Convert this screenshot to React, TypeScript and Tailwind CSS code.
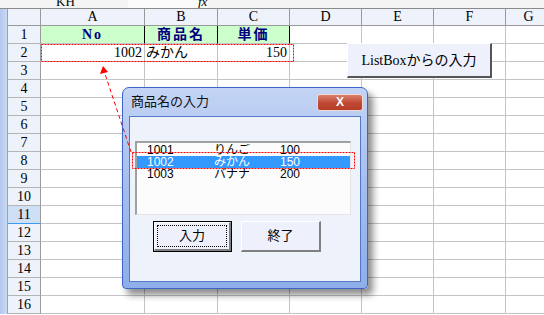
import React from 'react';

const serif = "font-['Liberation_Serif','Noto_Sans_CJK_JP',serif]";
const sans = "font-['Liberation_Sans','Noto_Sans_CJK_JP',sans-serif]";

const colWidths = [104, 73, 72, 72, 72, 72, 46];
const colNames = ['A', 'B', 'C', 'D', 'E', 'F', 'G'];

const listItems = [
  { no: '1001', name: 'りんご', price: '100' },
  { no: '1002', name: 'みかん', price: '150' },
  { no: '1003', name: 'バナナ', price: '200' },
];

function RowHeader({ n }: { n: number }) {
  const selected = n === 11;
  return (
    <div
      className={
        'flex h-[18px] w-[33px] shrink-0 items-center justify-center border-r border-r-[#9a9a9a] text-[14px] leading-none ' +
        (selected
          ? 'border-b border-b-[#3c9bf4] bg-[#cfdff5]'
          : 'border-b border-b-[#b4b4b4] bg-[#eef2fb]')
      }
    >
      {n}
    </div>
  );
}

function SheetRow({ n }: { n: number }) {
  return (
    <div className="flex">
      <RowHeader n={n} />
      {colWidths.map((w, i) => {
        let content: React.ReactNode = null;
        let cls = 'border-r border-b border-[#c4c4c4] bg-white';
        if (n === 1 && i < 3) {
          cls = 'border-r border-b border-r-black border-b-[#c4c4c4] bg-[#ccffcc] justify-center font-bold tracking-[2px] text-[#000080]';
          content = ['No', '商品名', '単価'][i];
        }
        if (n === 2) {
          if (i === 0) {
            cls += ' justify-end pr-[2px]';
            content = '1002';
          } else if (i === 1) {
            cls += ' justify-start pl-[1px]';
            content = 'みかん';
          } else if (i === 2) {
            cls += ' justify-end pr-[2px]';
            content = '150';
          }
        }
        return (
          <div
            key={i}
            style={{ width: w }}
            className={'flex h-[18px] shrink-0 items-center text-[14px] leading-none ' + cls}
          >
            {content}
          </div>
        );
      })}
    </div>
  );
}

function Dialog() {
  return (
    <div className="absolute left-[122px] top-[87px] flex h-[202px] w-[246px] flex-col rounded-t-[7px] rounded-b-[4px] border border-[#3d64c8] bg-gradient-to-b from-[#c3d4f4] via-[#a4bdee] to-[#8eaee9] shadow-[5px_6px_7px_rgba(0,0,0,0.45)]">
      {/* title bar */}
      <div className="flex h-[28px] shrink-0 items-center justify-between pl-[8px] pr-[4px]">
        <span className={sans + ' text-[13px] text-[#101010]'}>商品名の入力</span>
        <div className="flex h-[17px] w-[46px] items-center justify-center rounded-[3px] border border-[#f0d8d0] bg-gradient-to-b from-[#d8806c] via-[#c14a36] to-[#b43c2a]">
          <span className={sans + ' text-[12px] font-bold leading-none text-white'}>X</span>
        </div>
      </div>
      {/* client area */}
      <div className="mx-[6px] mb-[6px] flex flex-1 flex-col border border-[#5577c8] bg-[#eef2fb] px-[5px] pt-[24px]">
        <div className="h-[74px] w-[216px] overflow-hidden border-t-2 border-l-2 border-t-[#a0a0a0] border-l-[#a0a0a0] border-r border-b border-r-[#e4e4e4] border-b-[#e4e4e4] bg-[#fcfcfc] pt-[1px]">
          {listItems.map((it, i) => (
            <div
              key={it.no}
              className={
                sans +
                ' grid h-[12px] grid-cols-[67px_66px_1fr] overflow-hidden pl-[10px] text-[12px] leading-[12px] ' +
                (i === 1 ? 'bg-[#3399ff] text-white' : 'text-black')
              }
            >
              <span className="h-[12px] overflow-hidden">{it.no}</span>
              <span className="h-[12px] overflow-hidden">{it.name}</span>
              <span className="h-[12px] overflow-hidden">{it.price}</span>
            </div>
          ))}
        </div>
        <div className="mt-[6px] flex gap-[9px] pl-[18px]">
          <div className="h-[31px] w-[79px] border border-black">
            <div className="flex h-full w-full items-center justify-center border-t border-l border-r-2 border-b-2 border-t-white border-l-white border-r-[#808080] border-b-[#808080] bg-[#eef0fb] p-[2px]">
              <div className={sans + ' flex h-full w-full items-center justify-center border border-dotted border-black text-[13px]'}>
                入力
              </div>
            </div>
          </div>
          <div className={sans + ' flex h-[31px] w-[80px] items-center justify-center border-t border-l border-r-2 border-b-2 border-t-white border-l-white border-r-[#808080] border-b-[#808080] bg-[#eef0fb] text-[13px]'}>
            終了
          </div>
        </div>
      </div>
    </div>
  );
}

export default function App() {
  const rows = Array.from({ length: 16 }, (_, i) => i + 1);
  return (
    <div className={serif + ' relative h-[315px] w-[544px] overflow-hidden bg-white text-black'}>
      {/* formula bar remnant */}
      <div className="flex h-[9px] items-end border-b border-[#8a8a8a] bg-[#f4f4f4]">
        <div className="relative h-[9px] w-[128px] overflow-hidden">
          <span className="absolute -top-[7px] left-[56px] text-[13px]">KH</span>
        </div>
        <div className="relative h-[9px] w-[80px] overflow-hidden bg-[#fbfbfb]">
          <span className="absolute -top-[7px] left-[70px] text-[13px] italic">fx</span>
        </div>
      </div>

      <div className="flex">
        {/* window frame strip */}
        <div className="w-[8px] shrink-0 border-r border-[#8ea3c6] bg-gradient-to-r from-[#b3c8ee] to-[#cad9f4]" />
        <div className="flex flex-col">
          {/* column header */}
          <div className="flex">
            <div className="h-[17px] w-[33px] shrink-0 border-r border-b border-[#9a9a9a] bg-[#eef2fb]" />
            {colWidths.map((w, i) => (
              <div
                key={i}
                style={{ width: w }}
                className="flex h-[17px] shrink-0 items-center justify-center border-r border-b border-[#9a9a9a] bg-[#eef2fb] text-[14px] leading-none"
              >
                {colNames[i]}
              </div>
            ))}
          </div>
          {rows.map((n) => (
            <SheetRow key={n} n={n} />
          ))}
        </div>
      </div>

      {/* sheet button */}
      <div className="absolute left-[347px] top-[43px] flex h-[35px] w-[145px] items-center justify-center border-t border-l border-r-2 border-b-2 border-t-white border-l-white border-r-[#555] border-b-[#555] bg-[#eef0fb] text-[14px]">
        ListBoxからの入力
      </div>

      <Dialog />

      {/* annotations */}
      <svg className="pointer-events-none absolute left-0 top-0" width={544} height={315}>
        <rect x={41.5} y={44.5} width={252} height={17} fill="none" stroke="#ff0000" strokeDasharray="2 1" />
        <rect x={132.5} y={152.5} width={222} height={16} fill="none" stroke="#ff0000" strokeDasharray="2 1" />
        <line x1={131} y1={152} x2={105} y2={74} stroke="#ff0000" strokeDasharray="4 3" />
        <polygon points="103,66 100,74 108,72" fill="#ff0000" />
      </svg>
    </div>
  );
}
